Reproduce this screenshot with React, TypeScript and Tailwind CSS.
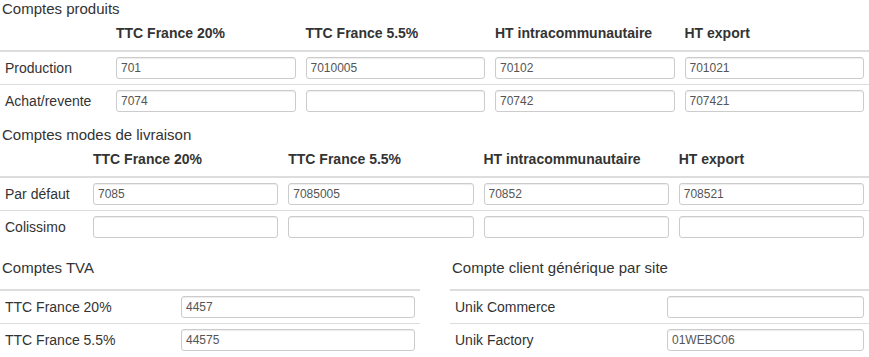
import React from "react";

const Field = ({ value }: { value: string }) => (
  <input
    readOnly
    defaultValue={value}
    className="block w-full h-[22px] border border-[#ccc] rounded-[3px] px-[4px] text-[12px] text-[#555] bg-white shadow-[inset_0_1px_1px_rgba(0,0,0,0.075)] outline-none"
  />
);

type Row = { label: string; values: string[] };

const Heading = ({ children }: { children: React.ReactNode }) => (
  <div className="h-[17px] text-[15px] leading-[17px] text-[#333] pl-[2px]">{children}</div>
);

const FourColTable = ({
  title,
  cols,
  rows,
  labelW,
}: {
  title: string;
  cols: string[];
  rows: Row[];
  labelW: string;
}) => (
  <div>
    <Heading>{title}</Heading>
    <div className={`grid ${labelW} border-b-2 border-[#ddd] h-[35px] items-end`}>
      <div />
      {cols.map((c) => (
        <div key={c} className="px-[5px] pb-[7px] text-[14px] leading-[20px] font-bold text-[#333] whitespace-nowrap">
          {c}
        </div>
      ))}
    </div>
    {rows.map((r, i) => (
      <div key={r.label} className={`grid ${labelW} items-center ${i > 0 ? "border-t border-[#ddd]" : ""}`}>
        <div className="px-[5px] text-[14px] leading-[20px] text-[#333] whitespace-nowrap">{r.label}</div>
        {r.values.map((v, j) => (
          <div key={j} className="p-[5px]">
            <Field value={v} />
          </div>
        ))}
      </div>
    ))}
  </div>
);

const TwoColTable = ({
  title,
  rows,
  labelW,
}: {
  title: string;
  rows: { label: string; value: string }[];
  labelW: string;
}) => (
  <div className="flex-1">
    <Heading>{title}</Heading>
    <div className="h-[15px] border-b-2 border-[#ddd]" />
    {rows.map((r, i) => (
      <div key={r.label} className={`grid ${labelW} items-center ${i > 0 ? "border-t border-[#ddd]" : ""}`}>
        <div className="px-[5px] text-[14px] leading-[20px] text-[#333] whitespace-nowrap">{r.label}</div>
        <div className="p-[5px]">
          <Field value={r.value} />
        </div>
      </div>
    ))}
  </div>
);

export default function App() {
  const cols = ["TTC France 20%", "TTC France 5.5%", "HT intracommunautaire", "HT export"];
  return (
    <div className="w-[869px] h-[357px] bg-white overflow-hidden font-['Liberation_Sans',Arial,sans-serif] text-[#333]">
      <FourColTable
        title="Comptes produits"
        cols={cols}
        labelW="grid-cols-[111px_1fr_1fr_1fr_1fr]"
        rows={[
          { label: "Production", values: ["701", "7010005", "70102", "701021"] },
          { label: "Achat/revente", values: ["7074", "", "70742", "707421"] },
        ]}
      />
      <div className="mt-[9px]">
        <FourColTable
          title="Comptes modes de livraison"
          cols={cols}
          labelW="grid-cols-[88px_1fr_1fr_1fr_1fr]"
          rows={[
            { label: "Par défaut", values: ["7085", "7085005", "70852", "708521"] },
            { label: "Colissimo", values: ["", "", "", ""] },
          ]}
        />
      </div>
      <div className="mt-[16px] flex gap-[30px]">
        <div className="w-[420px] shrink-0 flex">
          <TwoColTable
            title="Comptes TVA"
            labelW="grid-cols-[176px_1fr]"
            rows={[
              { label: "TTC France 20%", value: "4457" },
              { label: "TTC France 5.5%", value: "44575" },
            ]}
          />
        </div>
        <div className="flex-1 flex">
          <TwoColTable
            title="Compte client générique par site"
            labelW="grid-cols-[212px_1fr]"
            rows={[
              { label: "Unik Commerce", value: "" },
              { label: "Unik Factory", value: "01WEBC06" },
            ]}
          />
        </div>
      </div>
    </div>
  );
}
